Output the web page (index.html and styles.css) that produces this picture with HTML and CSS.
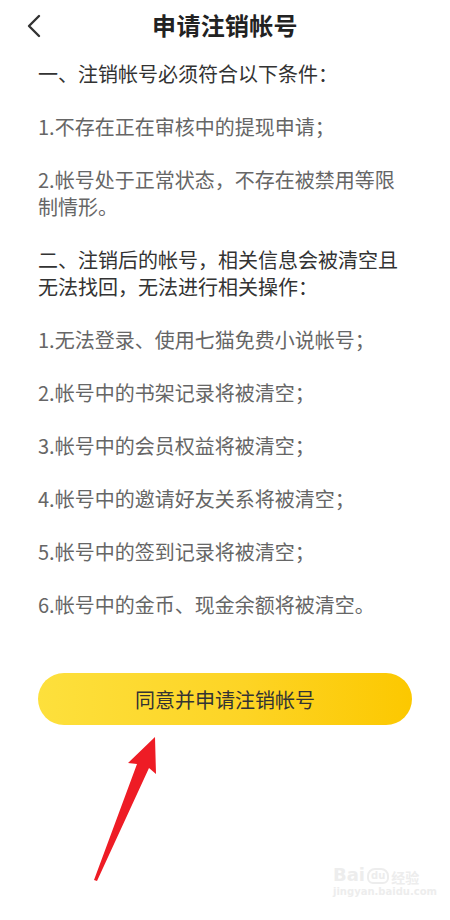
FILE: index.html
```html
<!DOCTYPE html>
<html lang="zh-CN">
<head>
<meta charset="utf-8">
<title>申请注销帐号</title>
<link rel="stylesheet" href="styles.css">
</head>
<body>
<div class="page">
  <header class="topbar">
    <span class="back">
      <svg width="16" height="24" viewBox="0 0 16 24"><path d="M13 2 L3 12 L13 22" fill="none" stroke="#333" stroke-width="2.4" stroke-linecap="round" stroke-linejoin="round"/></svg>
    </span>
    <h1 class="title">申请注销帐号</h1>
    <span class="spacer"></span>
  </header>
  <main class="content">
    <p class="para head">一、注销帐号必须符合以下条件：</p>
    <p class="para item">1.不存在正在审核中的提现申请；</p>
    <p class="para item">2.帐号处于正常状态，不存在被禁用等限制情形。</p>
    <p class="para head">二、注销后的帐号，相关信息会被清空且无法找回，无法进行相关操作：</p>
    <p class="para item">1.无法登录、使用七猫免费小说帐号；</p>
    <p class="para item">2.帐号中的书架记录将被清空；</p>
    <p class="para item">3.帐号中的会员权益将被清空；</p>
    <p class="para item">4.帐号中的邀请好友关系将被清空；</p>
    <p class="para item">5.帐号中的签到记录将被清空；</p>
    <p class="para item">6.帐号中的金币、现金余额将被清空。</p>
  </main>
  <div class="actions">
    <button class="btn">同意并申请注销帐号</button>
  </div>
  <svg class="arrow" width="450" height="920" viewBox="0 0 450 920">
    <polygon points="94,880 137,764 128,763 155,737 156,774 149,768 97,881" fill="#ee1c25"/>
  </svg>
  <div class="watermark">
    <div class="wm-top"><span class="wm-bai">Bai</span><span class="wm-du">du</span><span class="wm-jy">经验</span></div>
    <div class="wm-url">jingyan.baidu.com</div>
  </div>
</div>
</body>
</html>
```
FILE: styles.css
```css
html, body {
  margin: 0;
  padding: 0;
  background: #fff;
}
.page {
  position: relative;
  width: 450px;
  height: 920px;
  overflow: hidden;
  font-family: "Noto Sans CJK SC", "Noto Sans", sans-serif;
}
.topbar {
  height: 50px;
  display: grid;
  grid-template-columns: 60px 1fr 60px;
  align-items: center;
}
.back {
  display: flex;
  align-items: center;
  padding-left: 26px;
  padding-top: 1px;
}
.title {
  margin: 0;
  text-align: center;
  font-size: 24px;
  font-weight: 700;
  color: #222;
  line-height: 50px;
  letter-spacing: 0.3px;
}
.content {
  padding: 10px 38px 0 38px;
  display: flex;
  flex-direction: column;
  gap: 26px;
}
.para {
  margin: 0;
  font-size: 20px;
  line-height: 27px;
}
.head {
  color: #333;
}
.item {
  color: #666;
}
.actions {
  padding: 0 38px;
  margin-top: 55px;
}
.btn {
  display: flex;
  align-items: center;
  justify-content: center;
  width: 100%;
  height: 52px;
  border: none;
  border-radius: 26px;
  background: linear-gradient(90deg, #fde03c 0%, #fdd425 55%, #fcc800 100%);
  font-family: "Noto Sans CJK SC", "Noto Sans", sans-serif;
  font-size: 20px;
  color: #333;
  padding: 0;
}
.arrow {
  position: absolute;
  left: 0;
  top: 0;
  pointer-events: none;
}
.watermark {
  position: absolute;
  left: 333px;
  top: 866px;
  color: #ededed;
  font-family: "DejaVu Sans", sans-serif;
  line-height: 1;
}
.wm-top {
  display: flex;
  align-items: flex-end;
  gap: 2px;
}
.wm-bai {
  font-size: 18px;
  font-weight: 700;
}
.wm-du {
  font-size: 10px;
  font-weight: 700;
  border: 2px solid #ededed;
  border-radius: 8px 8px 6px 6px;
  padding: 1px 2px;
}
.wm-jy {
  font-size: 14px;
  font-family: "Noto Sans CJK SC", sans-serif;
  font-weight: 700;
}
.wm-url {
  font-size: 10px;
  font-weight: 700;
  margin-top: 3px;
}
```
